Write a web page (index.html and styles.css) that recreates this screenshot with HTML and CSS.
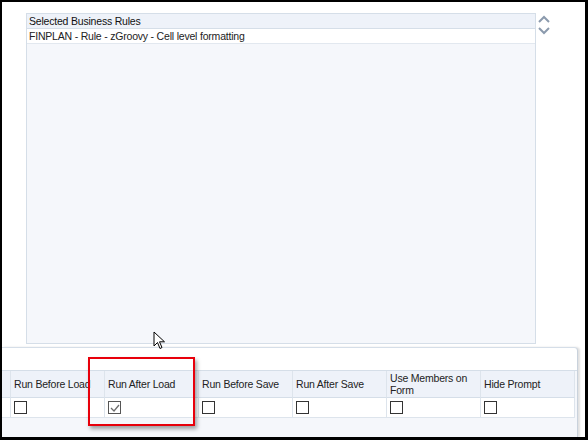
FILE: index.html
```html
<!DOCTYPE html>
<html lang="en">
<head>
  <meta charset="UTF-8">
  <title>Business Rules</title>
  <link rel="stylesheet" href="styles.css">
</head>
<body>

  <div class="frame">
    <div class="rules-area">
      <div class="rules-list">
        <div class="rules-head">Selected Business Rules</div>
        <div class="rules-row">FINPLAN - Rule - zGroovy - Cell level formatting</div>
      </div>
      <div class="sort-arrows">
        <svg width="14" height="24" viewBox="0 0 14 24">
          <path d="M2 9 L7 4 L12 9" fill="none" stroke="#8b9aad" stroke-width="2"/>
          <path d="M2 15 L7 20 L12 15" fill="none" stroke="#8b9aad" stroke-width="2"/>
        </svg>
      </div>
    </div>

    <div class="props-panel">
      <div class="props-toolbar"></div>
      <div class="props-grid">
        <div class="cell head"></div>
        <div class="cell head">Run Before Load</div>
        <div class="cell head">Run After Load</div>
        <div class="cell head">Run Before Save</div>
        <div class="cell head">Run After Save</div>
        <div class="cell head">Use Members on Form</div>
        <div class="cell head">Hide Prompt</div>

        <div class="cell"></div>
        <div class="cell"><span class="check"></span></div>
        <div class="cell"><span class="check checked">
          <svg width="10" height="10" viewBox="0 0 10 10"><path d="M1 5 L4 8 L9 2" fill="none" stroke="#6d6d6d" stroke-width="1.3"/></svg>
        </span></div>
        <div class="cell"><span class="check"></span></div>
        <div class="cell"><span class="check"></span></div>
        <div class="cell"><span class="check"></span></div>
        <div class="cell"><span class="check"></span></div>
      </div>
    </div>

    <!-- callout around the checked option -->
    <div class="callout"></div>

    <svg class="pointer" width="14" height="20" viewBox="0 0 14 20">
      <path d="M1 1 L1 15 L4.5 11.5 L7 17.5 L9 16.5 L6.5 10.8 L11.5 10.8 Z" fill="#fff" stroke="#000" stroke-width="1" stroke-linejoin="round"/>
    </svg>
  </div>

</body>
</html>
```

FILE: styles.css
```css
body {
  margin: 0;
  font-family: "Liberation Sans", Arial, sans-serif;
  font-size: 10.5px;
  letter-spacing: -0.2px;
  color: #222;
}
.frame {
  position: relative;
  width: 588px;
  height: 440px;
  box-sizing: border-box;
  border: 2px solid #000;
  border-right-width: 3px;
  border-bottom-width: 3px;
  background: #fff;
  overflow: hidden;
}
.rules-area {
  display: flex;
  padding: 11px 0 0 24px;
}
.rules-list {
  width: 510px;
  height: 331px;
  box-sizing: border-box;
  border: 1px solid #d5dee8;
  background: #f5f7fb;
}
.rules-head {
  height: 14px;
  line-height: 14px;
  padding-left: 2px;
  background: #eef2f9;
  border-bottom: 1px solid #d5dee8;
  color: #111;
}
.rules-row {
  height: 14px;
  line-height: 14px;
  padding-left: 2px;
  background: #fff;
  border-bottom: 1px solid #e2e8ef;
  color: #222;
}
.sort-arrows {
  padding: 0 0 0 1px;
}
.props-panel {
  margin-top: 3px;
  width: 576px;
  height: 90px;
  box-sizing: border-box;
  border-top: 1px solid #d5dee8;
  border-right: 1px solid #c9d2dc;
  border-top-right-radius: 4px;
  background: #f5f7fb;
  box-shadow: 2px 0 2px rgba(0, 0, 0, 0.12);
}
.props-toolbar {
  height: 22px;
  background: #fff;
  border-top-right-radius: 4px;
}
.props-grid {
  display: grid;
  grid-template-columns: 9px repeat(6, 94px);
  grid-template-rows: 27px 20px;
  border-top: 1px solid #d5dee8;
}
.cell {
  border-right: 1px solid #dde4ec;
  border-bottom: 1px solid #dde4ec;
  background: #fff;
  padding: 2px 3px;
  display: flex;
  align-items: center;
  white-space: nowrap;
  overflow: hidden;
}
.cell.head {
  background: #eef2f9;
  border-bottom-color: #d5dee8;
  line-height: 12px;
  white-space: normal;
  color: #222;
}
.check {
  width: 11px;
  height: 11px;
  border: 1px solid #333;
  background: #fff;
  display: flex;
  align-items: center;
  justify-content: center;
}
.check.checked {
  border-color: #555;
}
.callout {
  position: absolute;
  left: 86px;
  top: 355px;
  width: 103px;
  height: 65px;
  border: 2px solid #e8000b;
  box-shadow: 2px 3px 4px rgba(0, 0, 0, 0.35);
}
.pointer {
  position: absolute;
  left: 151px;
  top: 329px;
}
```
